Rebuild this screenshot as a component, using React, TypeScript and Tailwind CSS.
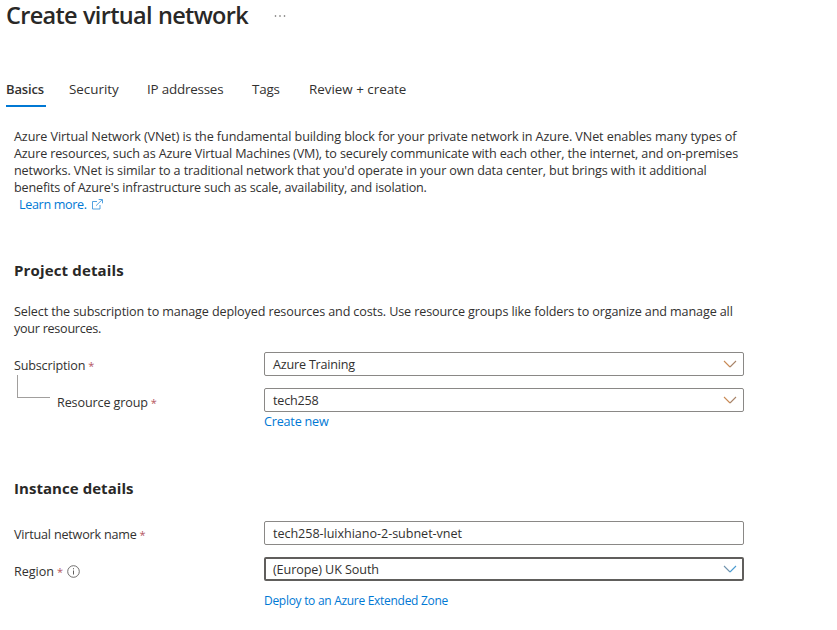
import type { ReactNode } from "react";

function Chevron({ left, right }: { left: string; right: string }) {
  return (
    <svg className="h-[8px] w-[14px]" viewBox="0 0 14 8" fill="none" strokeWidth="1.1">
      <path d="M1 1L7 7" stroke={left} />
      <path d="M7 7L13 1" stroke={right} />
    </svg>
  );
}

function Label({ children, tracking }: { children: string; tracking: string }) {
  return (
    <div className="flex gap-[3px]">
      <span className={tracking}>{children}</span>
      <span className="w-[6px] text-[11px] text-[#b4565f]">*</span>
    </div>
  );
}

function Field({ children, focused }: { children: ReactNode; focused?: boolean }) {
  return (
    <div
      className={
        focused
          ? "flex h-6 w-[480px] items-center justify-between rounded-[2px] border-2 border-[#605e5c] pl-[7px] pr-[5px]"
          : "flex h-6 w-[480px] items-center justify-between rounded-[2px] border border-[#8a8886] pl-2 pr-[6px]"
      }
    >
      {children}
    </div>
  );
}

export default function App() {
  return (
    <div className="h-[630px] w-[837px] overflow-hidden bg-white font-['Open_Sans','Noto_Sans',sans-serif] text-[12.6px] leading-[17px] whitespace-nowrap text-[#323130]">
      <header className="flex h-8 items-center pl-[6px]">
        <h1 className="w-[268px] text-[23.5px] leading-[30px] font-semibold tracking-[-0.68px] [word-spacing:0.6px] text-[#292827] -mt-[2px]">Create virtual network</h1>
        <svg className="h-[2px] w-3" viewBox="0 0 12 2" fill="#605e5c">
          <circle cx="1.5" cy="1" r=".8" />
          <circle cx="6" cy="1" r=".8" />
          <circle cx="10.5" cy="1" r=".8" />
        </svg>
      </header>

      <nav className="mt-[45px] flex h-[30px] pl-[6px] text-[13.4px] leading-[25px]">
        <div className="w-[40px] border-b-2 border-[#0078d4] text-[13px] font-semibold tracking-[-0.14px]">Basics</div>
        <div className="ml-[23px] w-[78px]">Security</div>
        <div className="w-[105px] tracking-[-0.2px]">IP addresses</div>
        <div className="w-[57px] tracking-[-0.2px]">Tags</div>
        <div className="tracking-[-0.01px]">Review + create</div>
      </nav>

      <main className="pl-[14px]">
        <div className="mt-[21px]">
          <p className="tracking-[-0.094px]">Azure Virtual Network (VNet) is the fundamental building block for your private network in Azure. VNet enables many types of</p>
          <p className="tracking-[-0.15px]">Azure resources, such as Azure Virtual Machines (VM), to securely communicate with each other, the internet, and on-premises</p>
          <p className="tracking-[-0.123px]">networks. VNet is similar to a traditional network that you'd operate in your own data center, but brings with it additional</p>
          <p className="tracking-[-0.17px]">benefits of Azure's infrastructure such as scale, availability, and isolation.</p>
          <a className="flex items-center gap-[5px] pl-[5px] text-[#0078d4]">
            <span className="tracking-[-0.35px]">Learn more.</span>
            <svg className="h-[11px] w-[11px]" viewBox="0 0 11 11" fill="none" stroke="#3f97dc" strokeWidth=".9">
              <path d="M5 2.5H.5v7.5h7.5V6M4 6.7L10 .9M6.7.5h3.8v3.8" />
            </svg>
          </a>
        </div>

        <section className="mt-[47px]">
          <h2 className="text-[15px] leading-5 font-bold tracking-[0.15px] text-[#292827]">Project details</h2>
          <div className="mt-[23px]">
            <p className="tracking-[-0.126px]">Select the subscription to manage deployed resources and costs. Use resource groups like folders to organize and manage all</p>
            <p className="tracking-[-0.27px]">your resources.</p>
          </div>
          <div className="mt-[15px] flex">
            <div className="w-[250px] pt-[5px]">
              <Label tracking="tracking-[-0.18px]">Subscription</Label>
              <div className="flex pl-[3px]">
                <div className="mt-[1px] h-[23px] w-[33px] border-b border-l border-[#a19f9d]" />
                <div className="pt-[20px] pl-[7px]">
                  <Label tracking="tracking-[-0.13px]">Resource group</Label>
                </div>
              </div>
            </div>
            <div>
              <Field>
                <span className="tracking-[-0.2px]">Azure Training</span>
                <Chevron left="#c98a55" right="#a88468" />
              </Field>
              <div className="mt-3">
                <Field>
                  <span className="tracking-[-0.2px]">tech258</span>
                  <Chevron left="#c98a55" right="#a88468" />
                </Field>
              </div>
              <a className="mt-[1px] block tracking-[-0.2px] text-[#0078d4]">Create new</a>
            </div>
          </div>
        </section>

        <section className="mt-[48px]">
          <h2 className="text-[15px] leading-5 font-bold tracking-[0.05px] text-[#292827]">Instance details</h2>
          <div className="mt-[23px] flex">
            <div className="w-[250px] pt-[5px]">
              <Label tracking="tracking-[-0.2px]">Virtual network name</Label>
            </div>
            <Field>
              <span className="tracking-[-0.05px]">tech258-luixhiano-2-subnet-vnet</span>
            </Field>
          </div>
          <div className="mt-3 flex">
            <div className="flex w-[250px] items-start pt-[6px]">
              <Label tracking="tracking-[-0.05px]">Region</Label>
              <svg className="mt-[2px] ml-[4px] h-[13px] w-[13px]" viewBox="0 0 13 13" fill="none" stroke="#605e5c">
                <circle cx="6.5" cy="6.5" r="5.8" strokeWidth=".9" />
                <path d="M6.5 5.5v4M6.5 3.2v1.1" />
              </svg>
            </div>
            <div>
              <Field focused>
                <span className="tracking-[-0.09px]">(Europe) UK South</span>
                <Chevron left="#6f93ad" right="#4b9bd0" />
              </Field>
              <a className="mt-[11px] block text-[12px] tracking-[-0.29px] text-[#0078d4]">Deploy to an Azure Extended Zone</a>
            </div>
          </div>
        </section>
      </main>
    </div>
  );
}
